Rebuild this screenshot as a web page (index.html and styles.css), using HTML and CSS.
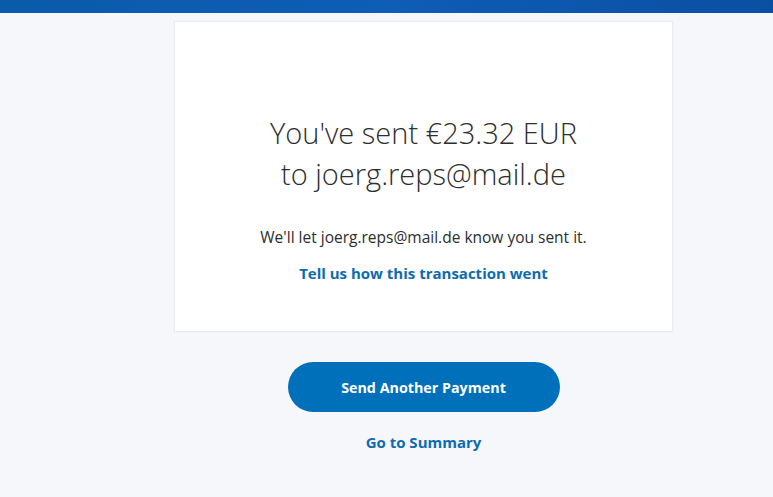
FILE: index.html
```html
<!DOCTYPE html>
<html lang="en">
<head>
    <meta charset="UTF-8">
    <meta name="viewport" content="width=device-width, initial-scale=1.0">
    <title>Payment Sent</title>
    <link rel="stylesheet" href="styles.css">
</head>
<body>

<div class="top-bar"></div>

<main class="page">
    <section class="card">
        <h1 class="headline">You've sent €23.32 EUR<br>to joerg.reps@mail.de</h1>
        <p class="notice">We'll let joerg.reps@mail.de know you sent it.</p>
        <a href="#" class="link">Tell us how this transaction went</a>
    </section>

    <div class="actions">
        <button type="button" class="btn-primary">Send Another Payment</button>
        <a href="#" class="link">Go to Summary</a>
    </div>
</main>

</body>
</html>
```

FILE: styles.css
```css
body {
    margin: 0;
    background-color: #f5f7fa;
    font-family: "Open Sans", Lato, sans-serif;
    color: #2c2e2f;
}

.top-bar {
    height: 13px;
    background: linear-gradient(to right, #0b5bab, #0e5db6 50%, #0b4fa3);
}

.page {
    display: flex;
    flex-direction: column;
    align-items: center;
    padding-left: 74px;
    padding-top: 8px;
}

.card {
    width: 499px;
    height: 311px;
    box-sizing: border-box;
    background-color: #ffffff;
    border: 1px solid #eaeced;
    box-shadow: 0 0 2px rgba(0, 0, 0, 0.04);
    display: flex;
    flex-direction: column;
    align-items: center;
    padding-top: 90px;
}

.headline {
    margin: 0;
    font-size: 29px;
    font-weight: 300;
    line-height: 41px;
    text-align: center;
    color: #2c2e2f;
}

.notice {
    margin: 33px 0 0;
    font-size: 15.5px;
    line-height: 20px;
}

.link {
    margin-top: 16px;
    font-size: 15px;
    font-weight: 700;
    line-height: 20px;
    color: #0e6bb0;
    text-decoration: none;
}

.actions {
    display: flex;
    flex-direction: column;
    align-items: center;
    margin-top: 30px;
}

.btn-primary {
    width: 272px;
    height: 50px;
    border: none;
    border-radius: 25px;
    background-color: #0070ba;
    color: #ffffff;
    font-family: inherit;
    font-size: 14.3px;
    font-weight: 700;
    cursor: pointer;
}

.actions .link {
    margin-top: 20px;
}
```
